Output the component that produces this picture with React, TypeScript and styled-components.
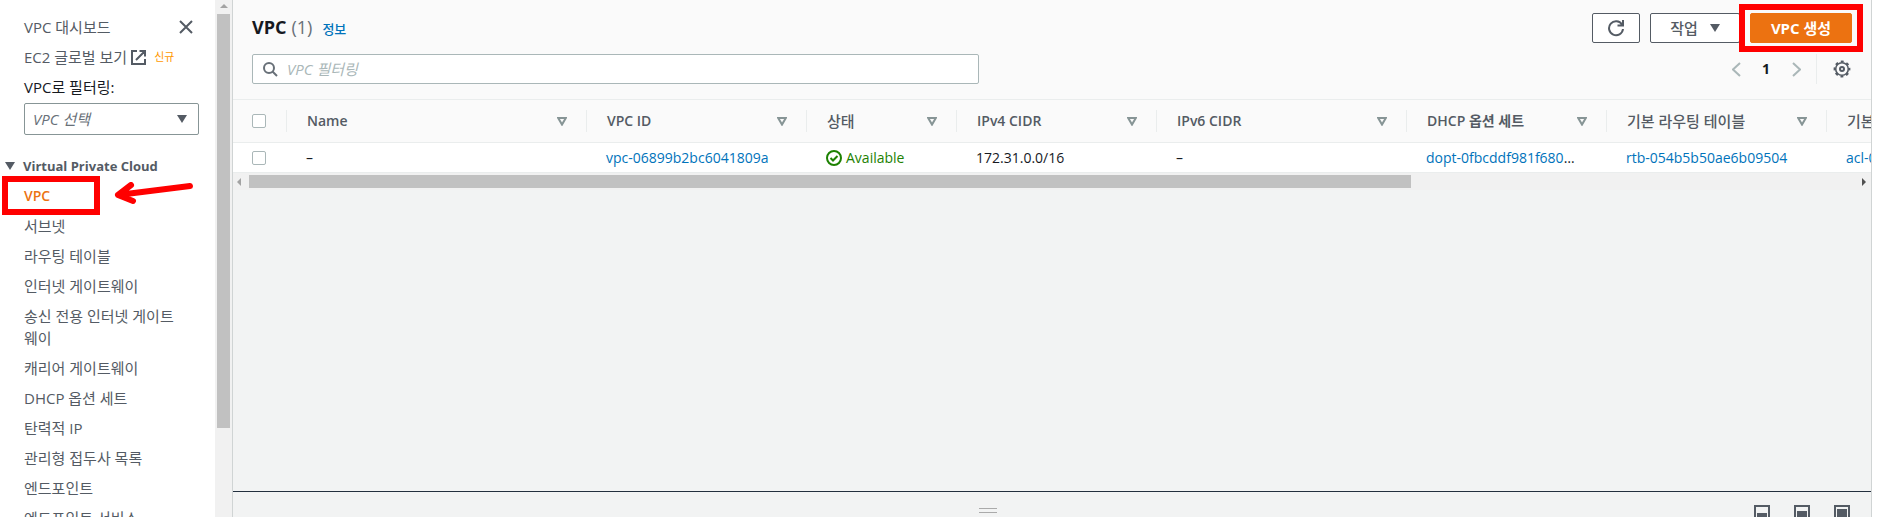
import React from "react";
import styled, { createGlobalStyle, css } from "styled-components";

const Global = createGlobalStyle`
  *, *::before, *::after { box-sizing: border-box; }
  body {
    margin: 0;
    background: #ffffff;
    color: #16191f;
    font: 14px/22px "Open Sans", "Noto Sans CJK KR", sans-serif;
  }
  button, input, select { font: inherit; color: inherit; }
  a { color: inherit; text-decoration: none; }
`;

const Shell = styled.div`
  display: flex;
  height: 100vh;
  overflow: hidden;
`;

const Sidebar = styled.nav`
  flex: 0 0 215px;
  padding: 16px 16px 0 24px;
  overflow: hidden;
  color: #545b64;
  font-size: 15px;
`;

const SideTop = styled.div`
  display: flex;
  align-items: center;
  justify-content: space-between;
  padding-right: 5px;
  margin-bottom: 8px;
`;

const PlainButton = styled.button`
  display: flex;
  align-items: center;
  justify-content: center;
  padding: 0;
  border: 0;
  background: none;
  color: #545b64;
`;

const SideRow = styled.div`
  display: flex;
  align-items: center;
  gap: 4px;
  margin-bottom: 8px;
`;

const NewTag = styled.span`
  margin-left: 4px;
  color: #ff9900;
  font-size: 11px;
`;

const FilterLabel = styled.label`
  display: block;
  margin-bottom: 5px;
  color: #16191f;
`;

const SelectBox = styled.div`
  display: grid;
  align-items: center;
  > * { grid-area: 1 / 1; }
  > svg { justify-self: end; margin-right: 12px; pointer-events: none; }
`;

const Select = styled.select`
  appearance: none;
  width: 100%;
  height: 32px;
  padding: 0 8px;
  border: 1px solid #879596;
  border-radius: 2px;
  background: #ffffff;
  color: #687078;
  font-style: italic;
`;

const GroupTitle = styled.button`
  display: flex;
  align-items: center;
  gap: 8px;
  margin: 20px 0 7px -19px;
  padding: 0;
  border: 0;
  background: none;
  color: #545b64;
  font-weight: 700;
  font-size: 13px;
`;

const NavList = styled.ul`
  display: flex;
  flex-direction: column;
  gap: 8px;
  margin: 0;
  padding: 0;
  list-style: none;
`;

const NavItem = styled.li`
  position: relative;
  padding-right: 16px;
`;

const NavLink = styled.a<{ $active?: boolean }>`
  word-break: break-all;
  ${(p) => p.$active && css`color: #ec7211; font-size: 14px; font-weight: 600;`}
`;

const Highlight = styled.span<{ $x: number; $y: number }>`
  position: absolute;
  inset: ${(p) => `${-p.$y}px ${-p.$x}px`};
  border: 6px solid #ff0000;
  pointer-events: none;
`;

const NavHighlight = styled(Highlight)`
  right: auto;
  width: 98px;
`;

const Arrow = styled.svg`
  position: absolute;
  left: 90px;
  top: -2px;
`;

const SideScroll = styled.div`
  display: flex;
  flex-direction: column;
  align-items: center;
  flex: 0 0 17px;
  background: #f1f1f1;
  > svg { flex: 0 0 14px; }
`;

const SideThumb = styled.div`
  width: 13px;
  height: 80%;
  background: #c1c1c1;
`;

const Main = styled.main`
  display: flex;
  flex-direction: column;
  flex: 1;
  min-width: 0;
  margin-right: 5px;
  border: solid #d0d4d4;
  border-width: 0 1px;
  background: #f2f3f3;
`;

const PanelHead = styled.header`
  padding: 13px 19px 15px;
  background: #fafafa;
  border-bottom: 1px solid #eaeded;
`;

const Row = styled.div`
  display: flex;
  align-items: center;
  justify-content: space-between;
`;

const TitleRow = styled(Row)`
  margin-bottom: 11px;
  height: 30px;
`;

const Title = styled.h1`
  display: flex;
  align-items: baseline;
  gap: 5px;
  margin: 0;
  font-size: 18px;
  font-weight: 700;
`;

const Count = styled.span`
  color: #687078;
  font-weight: 400;
`;

const InfoLink = styled.a`
  margin-left: 5px;
  color: #0073bb;
  font-size: 13px;
  font-weight: 500;
`;

const Actions = styled.div`
  display: flex;
  gap: 10px;
`;

const Button = styled.button<{ $primary?: boolean; $width: number }>`
  display: flex;
  align-items: center;
  justify-content: center;
  gap: 12px;
  width: ${(p) => p.$width}px;
  height: 30px;
  padding: 0;
  border: 1px solid ${(p) => (p.$primary ? "#ec7211" : "#545b64")};
  border-radius: 2px;
  background: ${(p) => (p.$primary ? "#ec7211" : "#ffffff")};
  color: ${(p) => (p.$primary ? "#ffffff" : "#545b64")};
  font-size: 15px;
  font-weight: ${(p) => (p.$primary ? 700 : 500)};
`;

const Marked = styled.div`
  position: relative;
`;

const Search = styled.div`
  display: flex;
  align-items: center;
  gap: 9px;
  width: calc(100% * 5 / 11);
  height: 30px;
  padding: 0 10px;
  border: 1px solid #aab7b8;
  border-radius: 2px;
  background: #ffffff;
`;

const SearchInput = styled.input`
  flex: 1;
  min-width: 0;
  padding: 0;
  border: 0;
  outline: 0;
  background: none;
  font-size: 15px;
  &::placeholder { color: #aab7b8; font-style: italic; opacity: 1; }
`;

const Pager = styled.div`
  display: flex;
  align-items: center;
  height: 30px;
  padding-right: 1px;
`;

const PageButton = styled(PlainButton)<{ $on?: boolean }>`
  width: 30px;
  color: ${(p) => (p.$on ? "#16191f" : "#aab7b8")};
  font-weight: 700;
`;

const Settings = styled(PlainButton)`
  height: 30px;
  margin-left: 5px;
  padding-left: 16px;
  border-left: 1px solid #eaeded;
`;

const TableClip = styled.div`
  overflow: hidden;
`;

const Table = styled.table`
  width: 1793px;
  table-layout: fixed;
  border-collapse: separate;
  border-spacing: 0;
`;

const Th = styled.th<{ $width: number; $hangul?: boolean }>`
  width: ${(p) => p.$width}px;
  height: 43px;
  padding: 0;
  border-bottom: 1px solid #eaeded;
  background: #fafafa;
  color: #545b64;
  text-align: left;
  font-size: ${(p) => (p.$hangul ? 15 : 14)}px;
  font-weight: ${(p) => (p.$hangul ? 500 : 600)};
`;

const HeadCell = styled.div`
  display: flex;
  align-items: center;
  justify-content: space-between;
  height: 22px;
  padding: 0 19px 0 20px;
  border-left: 1px solid #eaeded;
  white-space: nowrap;
`;

const Td = styled.td`
  height: 30px;
  padding: 0 24px 0 20px;
  border-bottom: 1px solid #eaeded;
  background: #ffffff;
  white-space: nowrap;
  overflow: hidden;
  text-overflow: ellipsis;
`;

const CheckCell = styled.div`
  display: flex;
  align-items: center;
  padding-left: 19px;
`;

const TdCheck = styled(Td)`
  padding: 0;
`;

const Check = styled.input`
  appearance: none;
  width: 14px;
  height: 14px;
  margin: 0;
  border: 1px solid #aab7b8;
  border-radius: 2px;
  background: #ffffff;
`;

const CellLink = styled.a`
  color: #0073bb;
`;

const Status = styled.span`
  display: flex;
  align-items: center;
  gap: 4px;
  color: #1d8102;
`;

const TableScroll = styled.div`
  display: flex;
  align-items: center;
  justify-content: space-between;
  height: 17px;
  padding: 0 5px 0 4px;
  background: #f1f1f1;
`;

const ScrollTrack = styled.div`
  flex: 1;
  margin: 0 8px;
`;

const TableThumb = styled.div`
  width: 72.4%;
  height: 13px;
  background: #c1c1c1;
`;

const SplitPanel = styled.footer`
  display: grid;
  grid-template-columns: 7fr 18px 8fr;
  align-items: start;
  height: 26px;
  margin-top: auto;
  padding: 13px 21px 0 0;
  border-top: 1px solid #232f3e;
`;

const Grip = styled.div`
  grid-column: 2;
  height: 5px;
  margin-top: 3px;
  border: solid #aaaaaa;
  border-width: 1px 0;
`;

const PanelModes = styled.div`
  display: flex;
  justify-content: flex-end;
  gap: 24px;
`;

const Down = () => (
  <svg width="10" height="8" viewBox="0 0 10 8" aria-hidden="true"><path d="M0 0h10L5 8z" fill="#545b64" /></svg>
);

const SortMark = () => (
  <svg width="10" height="9" viewBox="0 0 10 9" aria-hidden="true"><path d="M1.2 1h7.6L5 7.6z" fill="none" stroke="#879596" strokeWidth="2" /></svg>
);

const Chevron = ({ d }: { d: string }) => (
  <svg width="9" height="15" viewBox="0 0 9 15" fill="none" stroke="currentColor" strokeWidth="2" aria-hidden="true"><path d={d} /></svg>
);

const PanelIcon = ({ y }: { y: number }) => (
  <svg width="16" height="16" viewBox="0 0 16 16" aria-hidden="true">
    <path d="M1 1h14v14H1z" fill="none" stroke="#545b64" strokeWidth="2" />
    <path d={`M3 ${y}h10V13H3z`} fill="#545b64" />
  </svg>
);

const columns = [
  { label: "Name", width: 300 },
  { label: "VPC ID", width: 220 },
  { label: "상태", width: 150, hangul: true },
  { label: "IPv4 CIDR", width: 200 },
  { label: "IPv6 CIDR", width: 250 },
  { label: "DHCP 옵션 세트", width: 200 },
  { label: "기본 라우팅 테이블", width: 220, hangul: true },
  { label: "기본 네트워크 ACL", width: 200, hangul: true },
];

const navItems = [
  "서브넷", "라우팅 테이블", "인터넷 게이트웨이", "송신 전용 인터넷 게이트웨이", "캐리어 게이트웨이",
  "DHCP 옵션 세트", "탄력적 IP", "관리형 접두사 목록", "엔드포인트", "엔드포인트 서비스",
];

export default function App() {
  return (
    <Shell>
      <Global />
      <Sidebar aria-label="VPC">
        <SideTop>
          <a href="#dashboard">VPC 대시보드</a>
          <PlainButton aria-label="닫기">
            <svg width="16" height="16" viewBox="0 0 16 16" stroke="currentColor" strokeWidth="2"><path d="M2 2l12 12M14 2L2 14" /></svg>
          </PlainButton>
        </SideTop>
        <SideRow>
          <a href="#ec2">EC2 글로벌 보기</a>
          <svg width="15" height="15" viewBox="0 0 15 15" fill="none" stroke="currentColor" strokeWidth="2" aria-hidden="true">
            <path d="M6 1H1v13h13V9M8.500 1H14v5.500M14 1L5 10" />
          </svg>
          <NewTag>신규</NewTag>
        </SideRow>
        <FilterLabel htmlFor="vpc-filter">VPC로 필터링:</FilterLabel>
        <SelectBox>
          <Select id="vpc-filter"><option>VPC 선택</option></Select>
          <Down />
        </SelectBox>
        <GroupTitle><Down />Virtual Private Cloud</GroupTitle>
        <NavList>
          <NavItem>
            <NavLink href="#vpcs" $active>VPC</NavLink>
            <NavHighlight $x={22} $y={8} />
            <Arrow width="80" height="24" viewBox="0 0 80 24" fill="none" stroke="#ff0000" strokeWidth="6" strokeLinecap="round" strokeLinejoin="round">
              <path d="M76 4L4 13M17 3L4 13l15 6" />
            </Arrow>
          </NavItem>
          {navItems.map((label) => (
            <NavItem key={label}><NavLink href="#nav">{label}</NavLink></NavItem>
          ))}
        </NavList>
      </Sidebar>
      <SideScroll aria-hidden="true">
        <svg width="8" height="14" viewBox="0 0 8 14"><path d="M0 8h8L4 4z" fill="#a3a3a3" /></svg>
        <SideThumb />
      </SideScroll>
      <Main>
        <PanelHead>
          <TitleRow>
            <Title>VPC <Count>(1)</Count><InfoLink href="#info">정보</InfoLink></Title>
            <Actions>
              <Button $width={48} aria-label="새로 고침">
                <svg width="18" height="18" viewBox="0 0 18 18" fill="none" stroke="currentColor" strokeWidth="2"><path d="M15 5.500A7 7 0 1 0 16 10M16 1v5.500h-5.500" /></svg>
              </Button>
              <Button $width={90}>작업 <Down /></Button>
              <Marked>
                <Button $primary $width={102}>VPC 생성</Button>
                <Highlight $x={11} $y={9} />
              </Marked>
            </Actions>
          </TitleRow>
          <Row>
            <Search>
              <svg width="15" height="15" viewBox="0 0 15 15" fill="none" stroke="#687078" strokeWidth="2" aria-hidden="true"><circle cx="6" cy="6" r="5" /><path d="M9.500 9.500L14 14" /></svg>
              <SearchInput aria-label="VPC 필터링" placeholder="VPC 필터링" />
            </Search>
            <Pager>
              <PageButton aria-label="이전"><Chevron d="M8 1L1 7.500L8 14" /></PageButton>
              <PageButton $on>1</PageButton>
              <PageButton aria-label="다음"><Chevron d="M1 1l7 6.500L1 14" /></PageButton>
              <Settings aria-label="설정">
                <svg width="18" height="18" viewBox="0 0 18 18" fill="none" stroke="currentColor">
                  <circle cx="9" cy="9" r="6.300" strokeWidth="1.600" />
                  <circle cx="9" cy="9" r="7.500" strokeWidth="1.800" strokeDasharray="2.945 2.945" strokeDashoffset="1.470" />
                  <circle cx="9" cy="9" r="2" strokeWidth="2" />
                </svg>
              </Settings>
            </Pager>
          </Row>
        </PanelHead>
        <TableClip>
          <Table>
            <thead>
              <tr>
                <Th $width={53}><CheckCell><Check type="checkbox" aria-label="모두 선택" /></CheckCell></Th>
                {columns.map((c) => (
                  <Th key={c.label} $width={c.width} $hangul={c.hangul}><HeadCell>{c.label}<SortMark /></HeadCell></Th>
                ))}
              </tr>
            </thead>
            <tbody>
              <tr>
                <TdCheck><CheckCell><Check type="checkbox" aria-label="행 선택" /></CheckCell></TdCheck>
                <Td>–</Td>
                <Td><CellLink href="#vpc">vpc-06899b2bc6041809a</CellLink></Td>
                <Td>
                  <Status>
                    <svg width="16" height="16" viewBox="0 0 16 16" fill="none" stroke="currentColor" strokeWidth="2" aria-hidden="true"><circle cx="8" cy="8" r="7" /><path d="M4.500 8l2.500 2.500L11.500 6" /></svg>
                    Available
                  </Status>
                </Td>
                <Td>172.31.0.0/16</Td>
                <Td>–</Td>
                <Td><CellLink href="#dopt">dopt-0fbcddf981f680a5c</CellLink></Td>
                <Td><CellLink href="#rtb">rtb-054b5b50ae6b09504</CellLink></Td>
                <Td><CellLink href="#acl">acl-0</CellLink></Td>
              </tr>
            </tbody>
          </Table>
        </TableClip>
        <TableScroll aria-hidden="true">
          <svg width="4" height="8" viewBox="0 0 4 8"><path d="M4 0v8L0 4z" fill="#a3a3a3" /></svg>
          <ScrollTrack><TableThumb /></ScrollTrack>
          <svg width="4" height="8" viewBox="0 0 4 8"><path d="M0 0v8l4-4z" fill="#505050" /></svg>
        </TableScroll>
        <SplitPanel>
          <Grip />
          <PanelModes>
            <PanelIcon y={8} /><PanelIcon y={6} /><PanelIcon y={4} />
          </PanelModes>
        </SplitPanel>
      </Main>
    </Shell>
  );
}
